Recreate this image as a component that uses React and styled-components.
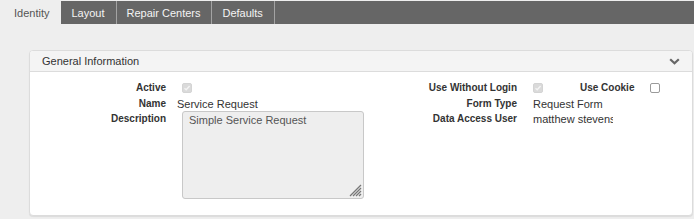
import React from "react";
import styled, { createGlobalStyle } from "styled-components";

const Global = createGlobalStyle`
  html, body { margin: 0; padding: 0; background: #eee; }
  body {
    font-family: "Liberation Sans", Arial, sans-serif;
    font-size: 11px;
    color: #333;
  }
`;

const Page = styled.div`
  padding-top: 1px;
  min-height: 219px;
  box-sizing: border-box;
  background: #eee;
`;

const TabBar = styled.nav`
  display: flex;
  height: 23px;
  background: #666;
`;

const Tab = styled.div`
  display: flex;
  align-items: center;
  padding: ${(p) => (p.$active ? "0 12px 0 14px" : "0 11px 0 10px")};
  background: ${(p) => (p.$active ? "#eee" : "transparent")};
  color: ${(p) => (p.$active ? "#555" : "#f4f4f4")};
  border-right: ${(p) => (p.$active ? "none" : "1px solid #a3a3a3")};
  font-size: 11px;
  white-space: nowrap;
  cursor: pointer;
`;

const Card = styled.section`
  margin: 26px 1px 0 29px;
  background: #fff;
  border: 1px solid #dcdcdc;
  border-radius: 4px;
  box-shadow: 0 1px 1px rgba(0, 0, 0, 0.08);
  overflow: hidden;
`;

const CardHeader = styled.header`
  display: flex;
  align-items: center;
  justify-content: space-between;
  height: 20px;
  padding: 0 12px;
  background: #f4f4f4;
  border-bottom: 1px solid #dcdcdc;
  font-size: 11px;
  color: #333;
`;

const Body = styled.div`
  display: flex;
  padding: 7px 0 16px 36px;
`;

const Group = styled.div`
  display: grid;
  grid-template-columns: 100px auto;
  grid-template-rows: 17px 15px auto;
  column-gap: ${(p) => p.$gap}px;
  width: ${(p) => (p.$width ? `${p.$width}px` : "auto")};
  align-content: start;
`;

const Label = styled.div`
  font-size: 10px;
  font-weight: bold;
  color: #333;
  text-align: right;
  white-space: nowrap;
  line-height: 16px;
  align-self: ${(p) => (p.$top ? "start" : "center")};
`;

const Value = styled.div`
  font-size: 11px;
  color: #333;
  line-height: 16px;
  white-space: nowrap;
  overflow: hidden;
  align-self: ${(p) => (p.$top ? "start" : "center")};
  max-width: ${(p) => (p.$clip ? `${p.$clip}px` : "none")};
`;

const CheckRow = styled.div`
  display: flex;
  align-items: center;
  align-self: center;
  padding-left: ${(p) => p.$indent || 0}px;
`;

const Check = styled.span`
  display: inline-flex;
  align-items: center;
  justify-content: center;
  box-sizing: border-box;
  width: 10px;
  height: 10px;
  border-radius: 2px;
  border: 1px solid ${(p) => (p.$checked ? "#d4d4d4" : "#9a9a9a")};
  background: ${(p) => (p.$checked ? "#dadada" : "#fff")};
  margin-left: ${(p) => p.$ml || 0}px;
`;

const InlineLabel = styled.span`
  font-size: 10px;
  font-weight: bold;
  color: #333;
  margin-left: ${(p) => p.$ml || 0}px;
  white-space: nowrap;
`;

const AreaWrap = styled.div`
  position: relative;
  width: 182px;
  height: 88px;
  margin-left: 5px;
`;

const TextArea = styled.textarea`
  display: block;
  box-sizing: border-box;
  width: 100%;
  height: 100%;
  margin: 0;
  padding: 1px 6px;
  background: #eee;
  border: 1px solid #c8c8c8;
  border-radius: 3px;
  color: #555;
  font: 11px/14px "Liberation Sans", Arial, sans-serif;
  resize: none;
  outline: none;
`;

const Grip = styled.svg`
  position: absolute;
  right: 2px;
  bottom: 2px;
  pointer-events: none;
`;

function CheckBox({ checked, ml }) {
  return (
    <Check $checked={checked} $ml={ml}>
      {checked && (
        <svg width="8" height="8" viewBox="0 0 8 8">
          <polyline
            points="1.5,4.2 3.2,5.8 6.6,2"
            fill="none"
            stroke="#f4f4f4"
            strokeWidth="1.4"
          />
        </svg>
      )}
    </Check>
  );
}

function Chevron() {
  return (
    <svg width="11" height="7" viewBox="0 0 11 7">
      <polyline
        points="1.2,1.2 5.5,5.3 9.8,1.2"
        fill="none"
        stroke="#666"
        strokeWidth="2.2"
      />
    </svg>
  );
}

export default function App() {
  return (
    <>
      <Global />
      <Page>
        <TabBar>
          <Tab $active>Identity</Tab>
          <Tab>Layout</Tab>
          <Tab>Repair Centers</Tab>
          <Tab>Defaults</Tab>
        </TabBar>
        <Card>
          <CardHeader>
            <span>General Information</span>
            <Chevron />
          </CardHeader>
          <Body>
            <Group $gap={11} $width={351}>
              <Label>Active</Label>
              <CheckRow $indent={5}>
                <CheckBox checked />
              </CheckRow>
              <Label>Name</Label>
              <Value>Service Request</Value>
              <Label $top>Description</Label>
              <AreaWrap>
                <TextArea readOnly defaultValue="Simple Service Request" />
                <Grip width="13" height="13" viewBox="0 0 13 13">
                  <g stroke="#777" strokeWidth="1.2">
                    <line x1="1" y1="12" x2="12" y2="1" />
                    <line x1="4" y1="12" x2="12" y2="4" />
                    <line x1="7" y1="12" x2="12" y2="7" />
                    <line x1="10" y1="12" x2="12" y2="10" />
                  </g>
                </Grip>
              </AreaWrap>
            </Group>
            <Group $gap={16}>
              <Label>Use Without Login</Label>
              <CheckRow>
                <CheckBox checked />
                <InlineLabel $ml={37}>Use Cookie</InlineLabel>
                <CheckBox ml={16} />
              </CheckRow>
              <Label>Form Type</Label>
              <Value $clip={80}>Request Form</Value>
              <Label $top>Data Access User</Label>
              <Value $top $clip={80}>matthew stevens</Value>
            </Group>
          </Body>
        </Card>
      </Page>
    </>
  );
}
